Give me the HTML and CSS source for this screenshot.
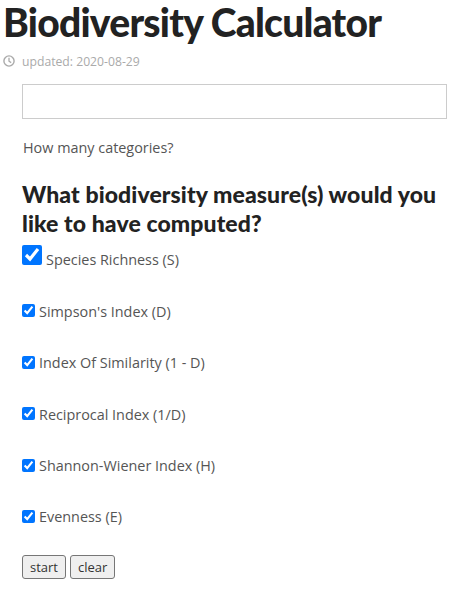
FILE: index.html
```html
<!DOCTYPE html>
<html lang="en">
<head>
    <meta charset="UTF-8">
    <meta name="viewport" content="width=device-width, initial-scale=1.0">
    <title>Biodiversity Calculator</title>
    <link rel="stylesheet" href="styles.css">
</head>
<body>
    <h1 class="title">Biodiversity Calculator</h1>
    <p class="updated">
        <svg class="clock" viewBox="0 0 12 12" width="12" height="12">
            <circle cx="6" cy="6" r="5.1" fill="none" stroke="#aaa" stroke-width="1.4"/>
            <path d="M6 2.8V6.2L8.2 7.6" fill="none" stroke="#aaa" stroke-width="1.3"/>
        </svg>
        <span>updated: 2020-08-29</span>
    </p>
    <div class="content">
        <input type="text" class="count-input">
        <p class="hint">How many categories?</p>
        <h2 class="question">What biodiversity measure(s) would you like to have computed?</h2>

        <div class="first-measure">
            <input type="checkbox" class="big-check" checked>
            <span>Species Richness (S)</span>
        </div>
        <div class="measure"><input type="checkbox" checked><span>Simpson's Index (D)</span></div>
        <div class="measure"><input type="checkbox" checked><span>Index Of Similarity (1 - D)</span></div>
        <div class="measure"><input type="checkbox" checked><span>Reciprocal Index (1/D)</span></div>
        <div class="measure"><input type="checkbox" checked><span>Shannon-Wiener Index (H)</span></div>
        <div class="measure"><input type="checkbox" checked><span>Evenness (E)</span></div>

        <div class="buttons">
            <button>start</button>
            <button>clear</button>
        </div>
    </div>
</body>
</html>
```

FILE: styles.css
```css
body {
    margin: 0;
    font-family: "Open Sans", sans-serif;
    font-size: 14.4px;
    color: #555;
    background-color: #fff;
}
.title {
    margin: 0;
    padding: 0 0 0 3px;
    font-family: "Lato", sans-serif;
    font-size: 39px;
    line-height: 44px;
    font-weight: 900;
    letter-spacing: -0.75px;
    color: #222;
    white-space: nowrap;
}
.updated {
    display: flex;
    align-items: center;
    gap: 7px;
    margin: 7px 0 0 3px;
    height: 20px;
    font-size: 12.2px;
    color: #aaa;
}
.content {
    padding: 0 11px 0 22px;
}
.count-input {
    display: block;
    box-sizing: border-box;
    width: 100%;
    height: 35px;
    margin-top: 13px;
    border: 1px solid #ccc;
    outline: none;
}
.hint {
    margin: 19px 0 0 1px;
    line-height: 20px;
}
.question {
    margin: 22px 0 0;
    font-family: "Lato", sans-serif;
    font-size: 23px;
    line-height: 29px;
    font-weight: 900;
    letter-spacing: 0.1px;
    color: #222;
}
.first-measure {
    display: flex;
    align-items: flex-end;
    gap: 4px;
    margin-top: 7px;
    height: 24px;
}
.big-check {
    width: 20px;
    height: 20px;
    margin: 0 0 4px;
}
.measure {
    display: flex;
    align-items: center;
    gap: 4px;
    margin-top: 33.4px;
    height: 18px;
}
.measure input {
    width: 13px;
    height: 13px;
    margin: 0 0 1px;
}
.buttons {
    display: flex;
    gap: 4px;
    margin-top: 29px;
}
button {
    height: 24px;
    padding: 0 7px;
    font-family: "Open Sans", sans-serif;
    font-size: 13px;
    color: #333;
    background-color: #efefef;
    border: 1px solid #767676;
    border-radius: 3px;
}
```
